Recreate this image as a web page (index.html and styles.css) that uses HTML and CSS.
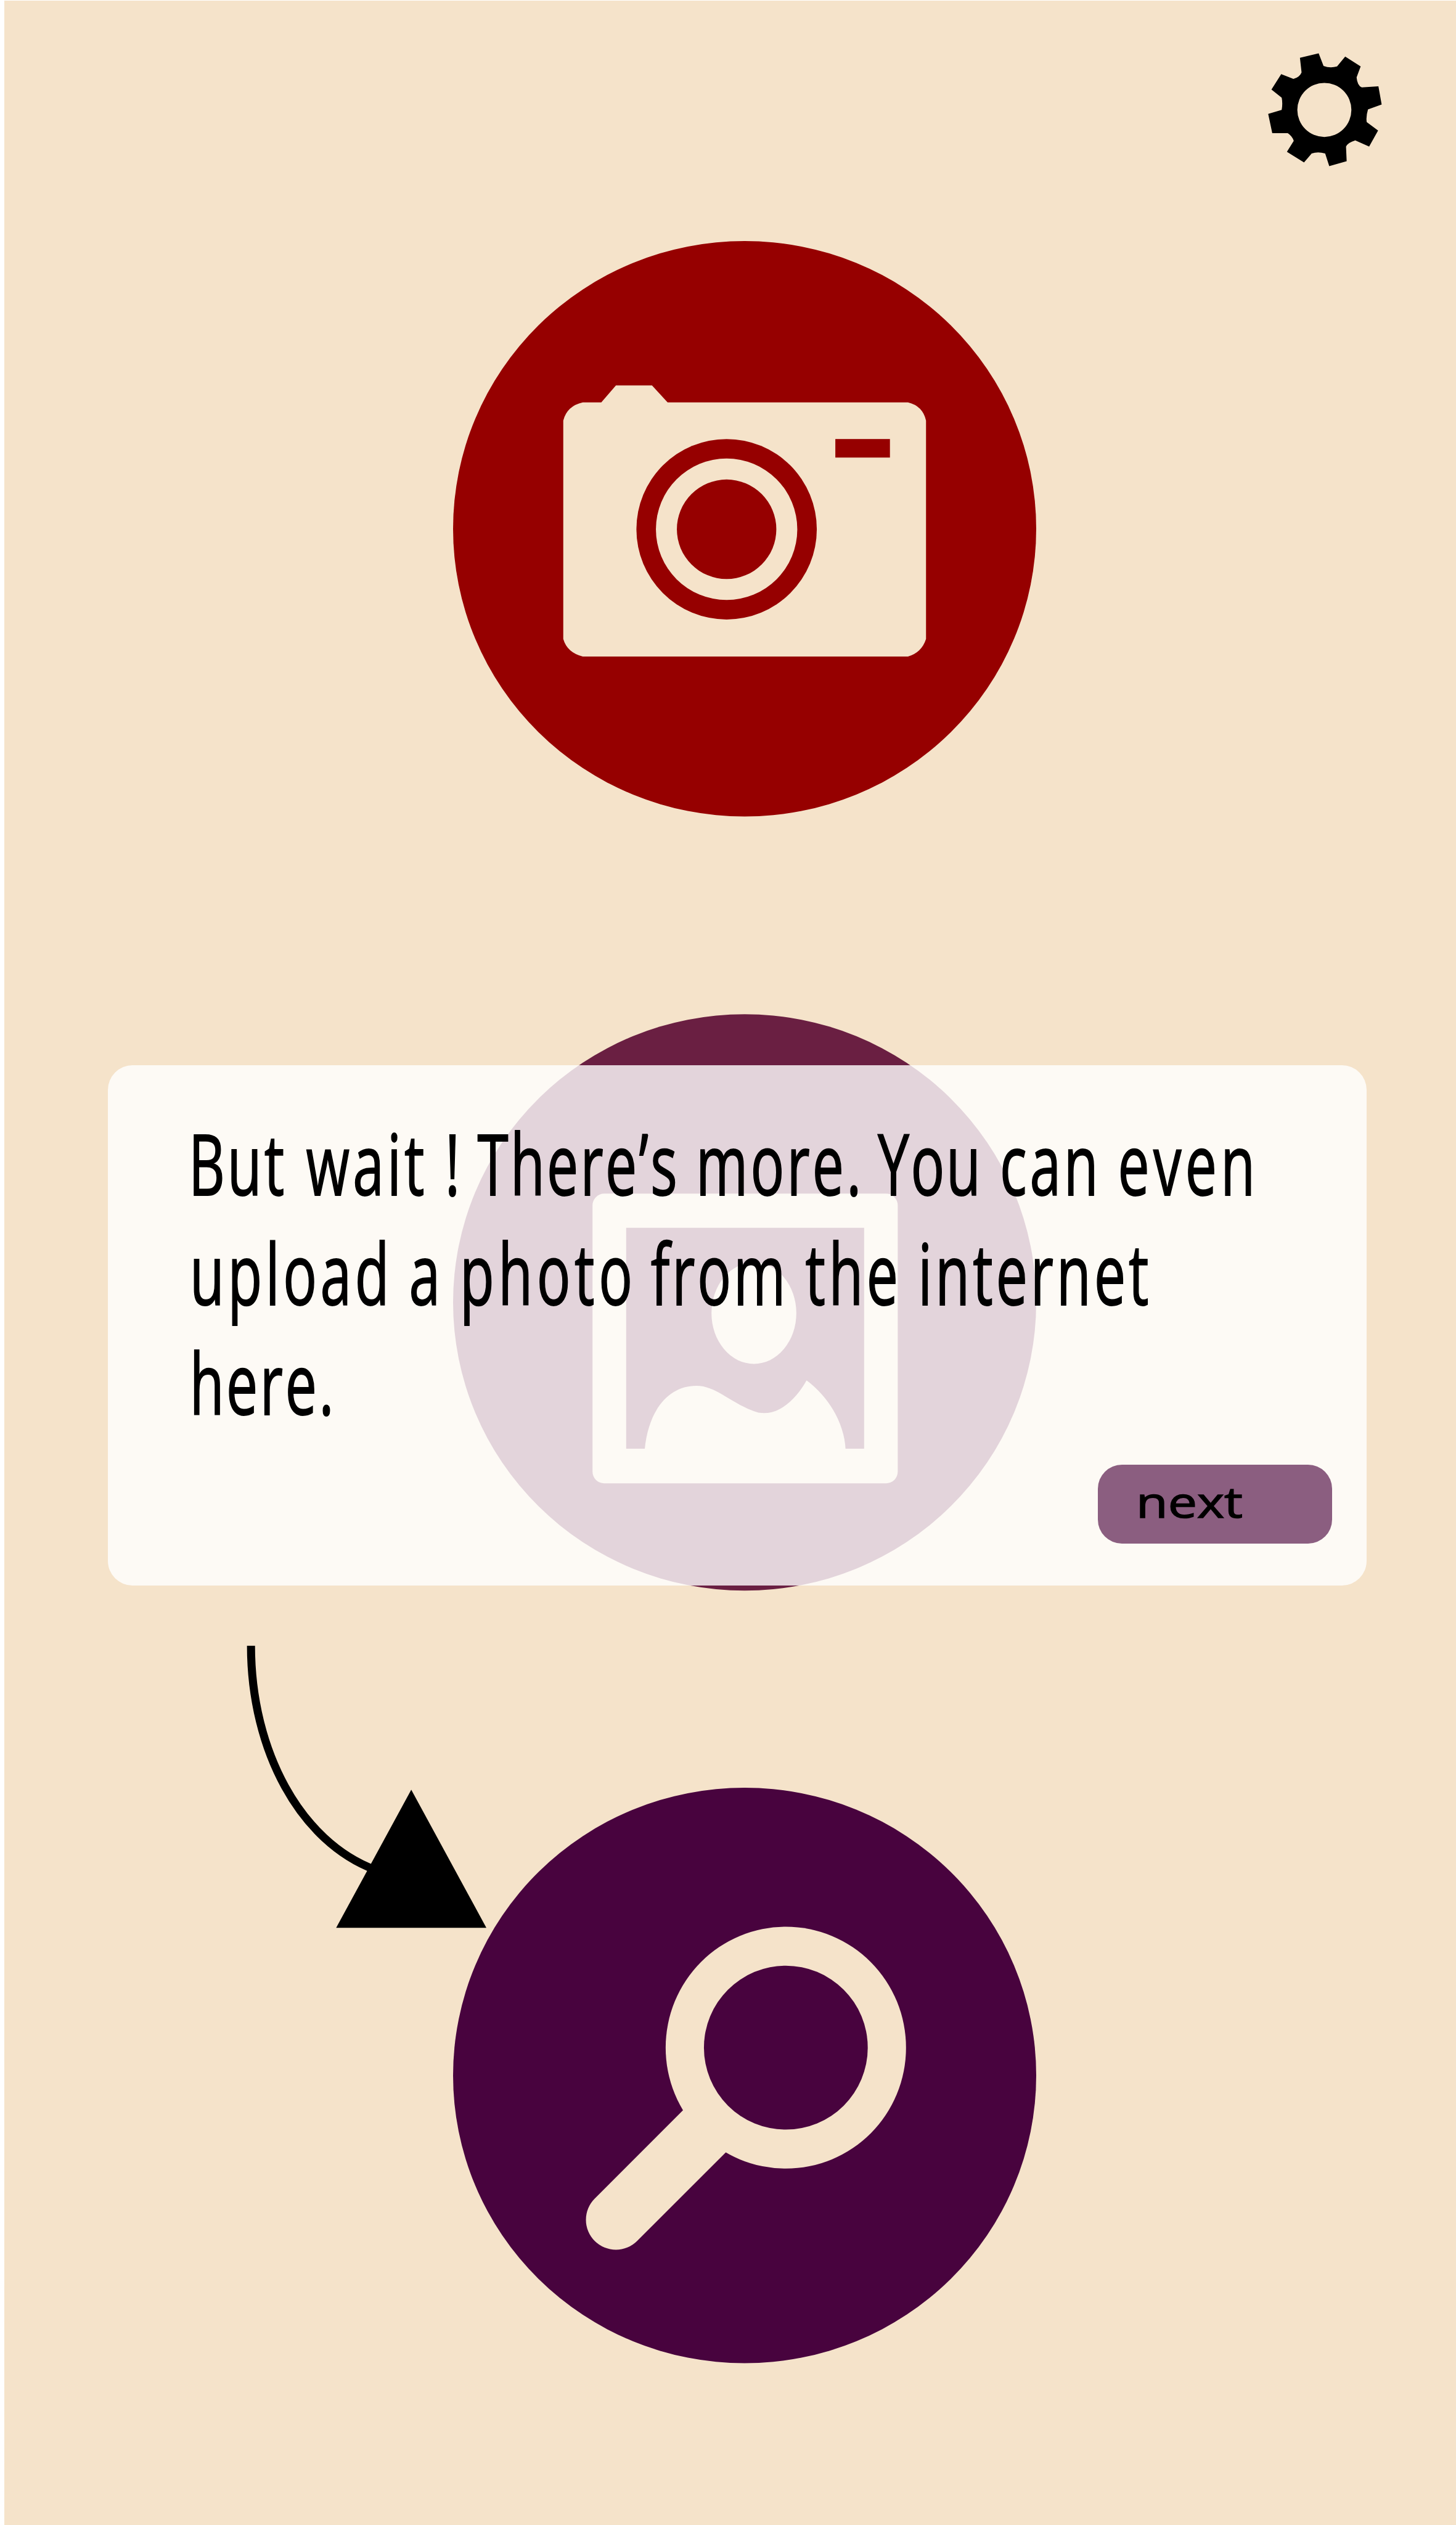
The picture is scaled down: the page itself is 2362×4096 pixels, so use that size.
FILE: index.html
```html
<!DOCTYPE html>
<html lang="en">
<head>
<meta charset="utf-8">
<title>Upload a photo</title>
<link rel="stylesheet" href="styles.css">
</head>
<body>
<div class="screen">
  <header class="topbar">
    <svg class="gear" viewBox="120 82 708 704" preserveAspectRatio="none" role="img" aria-label="Settings">
      <path fill-rule="evenodd" d="M320 115L435 88L465 165Q505 180 548 168L598 108L693 168L668 235Q672 285 700 297L802 290L822 402L738 432Q725 475 730 510L800 562L745 660L660 622Q615 635 603 660L607 750L500 780L475 703Q430 690 392 703L345 758L240 692L282 625Q272 595 245 578L150 578L125 460L208 435Q215 395 208 360L145 310L205 215L280 245Q318 235 330 205ZM636 435A166 166 0 1 0 304 435A166 166 0 1 0 636 435Z"/>
    </svg>
  </header>
  <main class="actions">
    <svg class="action" viewBox="929 494 1196 1180" preserveAspectRatio="none" role="img" aria-label="Camera">
      <ellipse class="red" cx="1527" cy="1084" rx="598" ry="590"/>
      <path class="cream" d="M1195 825H1233L1263 790H1337L1369 825H1862Q1892 832 1899 862V1310Q1890 1338 1862 1346H1195Q1163 1338 1155 1310V862Q1163 832 1195 825Z"/>
      <circle class="red" cx="1490" cy="1085" r="185"/>
      <circle class="cream" cx="1490" cy="1085" r="145"/>
      <circle class="red" cx="1490" cy="1085" r="102"/>
      <rect class="red" x="1713" y="900" width="112" height="38"/>
    </svg>
    <svg class="action" viewBox="929 2081 1196 1180" preserveAspectRatio="none" role="img" aria-label="Gallery">
      <ellipse class="plum" cx="1527" cy="2671" rx="598" ry="591"/>
      <rect class="cream" x="1215" y="2448" width="626" height="594" rx="24"/>
      <rect class="plum" x="1284" y="2518" width="488" height="453"/>
      <ellipse class="cream" cx="1546" cy="2693" rx="87" ry="104"/>
      <path class="cream" d="M1322 2973C1330 2890 1372 2842 1428 2842C1470 2842 1500 2880 1555 2897C1600 2905 1635 2865 1654 2831C1700 2865 1732 2920 1734 2973Z"/>
    </svg>
    <svg class="action" viewBox="929 3665 1196 1180" preserveAspectRatio="none" role="img" aria-label="Search">
      <ellipse class="violet" cx="1527" cy="4255" rx="598" ry="590"/>
      <path class="handle" d="M1263 4551L1450 4364"/>
      <ellipse class="cream" cx="1611.500" cy="4198" rx="246.500" ry="248"/>
      <circle class="violet" cx="1611.500" cy="4198" r="168"/>
    </svg>
  </main>
  <section class="tip">
    <svg class="message" viewBox="0 0 2727 533" preserveAspectRatio="none">
      <text y="137"><tspan x="0" textLength="235">But</tspan> <tspan x="288.6" textLength="291">wait</tspan> <tspan x="630.3">!</tspan> <tspan x="709.8" textLength="491">There’s</tspan> <tspan x="1247" textLength="406">more.</tspan> <tspan x="1693.7" textLength="253">You</tspan> <tspan x="1993.7" textLength="242">can</tspan> <tspan x="2284" textLength="337">even</tspan></text>
      <text y="315"><tspan x="3" textLength="490">upload</tspan> <tspan x="541.7">a</tspan> <tspan x="666.7" textLength="424">photo</tspan> <tspan x="1136" textLength="331">from</tspan> <tspan x="1515.7" textLength="228">the</tspan> <tspan x="1792.7" textLength="567">internet</tspan></text>
      <text y="492.600"><tspan x="2.5" textLength="354">here.</tspan></text>
    </svg>
    <button class="next" type="button"><span>next</span></button>
  </section>
  <svg class="arrow" viewBox="500 3370 500 590" preserveAspectRatio="none" aria-hidden="true">
    <path class="curve" d="M515.400 3374.600C515.400 3590 617 3777 770 3834"/>
    <path d="M844 3670L998 3953H690Z"/>
  </svg>
</div>
</body>
</html>
```
FILE: styles.css
```css
* { box-sizing: border-box; }

body {
  margin: 0;
  background: #fff;
}

.screen {
  position: relative;
  display: flex;
  flex-direction: column;
  width: 2362px;
  height: 4096px;
  overflow: hidden;
  border-left: 7px solid #fff;
  border-top: 1px solid #fff;
  background: #f5e3ca;
}

.topbar {
  display: flex;
  justify-content: flex-end;
  height: 390px;
  padding: 84px 119px 0 0;
}

.gear {
  width: 187px;
  height: 186px;
}

.actions {
  display: flex;
  flex-direction: column;
  gap: 321px;
  padding-left: 728px;
}

.action {
  display: block;
  width: 946px;
  height: 933.500px;
  overflow: visible;
}

.red { fill: #960000; }
.plum { fill: #6a1f42; }
.violet { fill: #48033e; }
.cream { fill: #f5e3ca; }

.handle {
  fill: none;
  stroke: #f5e3ca;
  stroke-width: 123;
  stroke-linecap: round;
}

.tip {
  position: absolute;
  left: 168px;
  top: 1727px;
  display: flex;
  flex-direction: column;
  justify-content: space-between;
  width: 2042px;
  height: 844px;
  padding: 74px 56px 68px 131px;
  border-radius: 40px;
  background: rgba(255, 255, 255, 0.81);
}

.message {
  display: block;
  flex: none;
  width: 1800px;
  height: 533px;
  overflow: visible;
  font: 138px "Open Sans", "Noto Sans", sans-serif;
  fill: #000;
  stroke: #000;
  stroke-width: 2;
}

.next {
  align-self: flex-end;
  width: 380px;
  height: 128px;
  padding: 0 0 10px 62px;
  border: 0;
  border-radius: 39px;
  background: #8b5e80;
  font: 69px/118px "Open Sans", "Noto Sans", sans-serif;
  color: #000;
  text-align: left;
}

.next span {
  display: inline-block;
  transform: scaleX(1.22);
  transform-origin: left;
  -webkit-text-stroke: 1.500px #000;
}

.arrow {
  position: absolute;
  left: 388px;
  top: 2665px;
  width: 395.600px;
  height: 466.800px;
}

.curve {
  fill: none;
  stroke: #000;
  stroke-width: 16.500;
}
```
